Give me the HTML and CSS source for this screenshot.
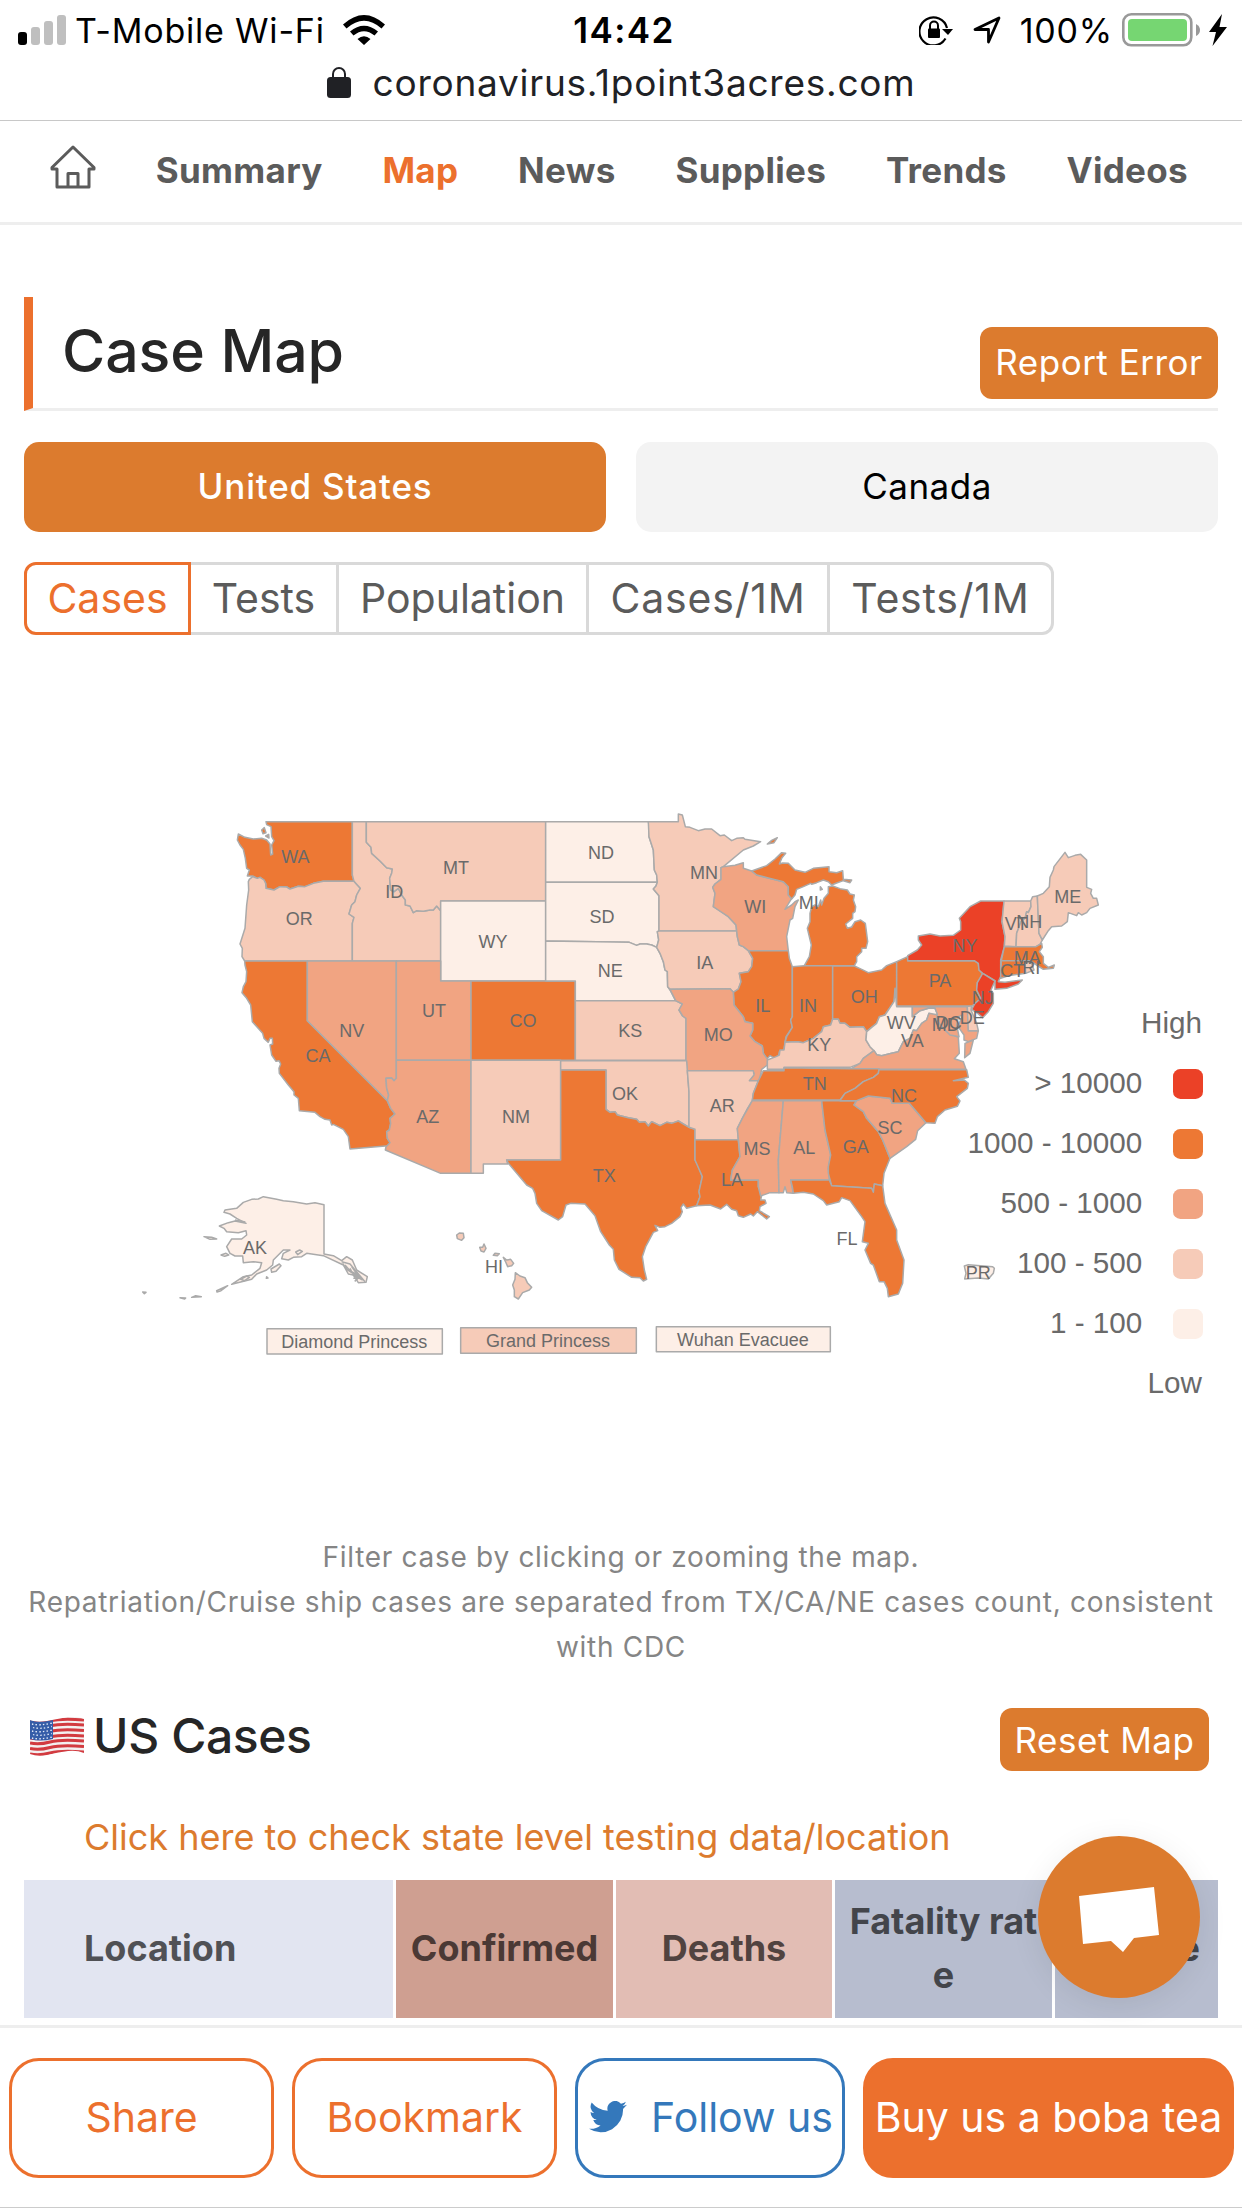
FILE: index.html
```html
<!DOCTYPE html>
<html lang="en">
<head>
  <meta charset="UTF-8">
  <meta name="viewport" content="width=device-width, initial-scale=1.0">
  <title>Case Map</title>
  <link rel="stylesheet" href="styles.css">
</head>
<body>
  <header class="browser-bar">
    <div class="status">
      <div class="status-left">
        <svg class="signal" viewBox="0 0 48 30"><rect y="17" width="9" height="13" rx="3"/><g fill="#bfbfbf"><rect x="13" y="12" width="9" height="18" rx="3"/><rect x="26" y="6" width="9" height="24" rx="3"/><rect x="39" width="9" height="30" rx="3"/></g></svg>
        <span class="carrier">T-Mobile Wi-Fi</span>
        <svg class="wifi" viewBox="0 0 42 30"><path d="M0 9.5Q21-9.5 42 9.5L38.500 13.500Q21-2 3.500 13.500ZM7 16.500Q21 5 35 16.500L31.500 20.500Q21 12 10.500 20.500ZM14.500 24Q21 18.500 27.500 24L21 30Z"/></svg>
      </div>
      <span class="clock">14:42</span>
      <div class="status-right">
        <svg class="rotation" viewBox="0 0 34 30"><path d="M26.500 23.500A14 14 0 1 1 28 13" fill="none" stroke="#000" stroke-width="2.200"/><path d="M23 14h11l-5 6z"/><rect x="9" y="13.500" width="12" height="9.500" rx="1"/><path d="M11 14v-3.500a4 4 0 0 1 8 0V14" fill="none" stroke="#000" stroke-width="2"/></svg>
        <svg class="location" viewBox="0 0 28 28"><path d="M2 13.500 26 2 15.500 26V13.500Z" fill="none" stroke="#000" stroke-width="2.800" stroke-linejoin="round"/></svg>
        <span class="percent">100%</span>
        <svg class="battery" viewBox="0 0 78 34"><rect x="1.300" y="1.300" width="68" height="31" rx="8" fill="none" stroke="#999" stroke-width="2.600"/><rect x="6" y="6" width="59" height="22" rx="4" fill="#76d672"/><path d="M74 11q4 2 4 6t-4 6z" fill="#999"/></svg>
        <svg class="bolt" viewBox="0 0 18 32"><path d="M13 0 0 18h7L3.500 32 18 13h-7.500z"/></svg>
      </div>
    </div>
    <div class="address">
      <svg class="lock" viewBox="0 0 24 31"><rect y="10" width="24" height="21" rx="3.500" fill="#202125"/><path d="M6 12V7a6 6 0 0 1 12 0v5" fill="none" stroke="#202125" stroke-width="2"/></svg>
      <span>coronavirus.1point3acres.com</span>
    </div>
  </header>

  <nav class="nav">
    <svg class="home" viewBox="0 0 46 44"><path d="M23 2 44 22.500V24H39V42H7V24H2V22.500Z M18 42V28.500H28V42" fill="none" stroke="#5b5b5b" stroke-width="3" stroke-linejoin="round"/></svg>
    <a>Summary</a>
    <a class="active">Map</a>
    <a>News</a>
    <a>Supplies</a>
    <a>Trends</a>
    <a>Videos</a>
  </nav>

  <main class="content">
    <div class="section-title">
      <h1>Case Map</h1>
      <button class="btn report">Report Error</button>
    </div>
    <div class="countries">
      <button class="selected">United States</button>
      <button>Canada</button>
    </div>
    <div class="tabs">
      <span class="tab on">Cases</span>
      <span class="tab">Tests</span>
      <span class="tab">Population</span>
      <span class="tab per">Cases/1M</span>
      <span class="tab per">Tests/1M</span>
    </div>
  </main>

  <svg class="map" viewBox="0 1902 3726 2700">
    <g class="states">
      <!-- west -->
      <g transform="translate(660 2370)">
        <path class="c4" d="M138 95H397V255L402 274H310L280 280 255 290 235 289 210 297 200 291 180 290 162 300 138 295 137 280 132 270 120 262 112 265 98 258 82 258 88 240 80 235 76 205 70 178 60 165 52 150 55 132 75 142 100 147 125 145 140 150 150 162 152 195 158 192 155 165 162 152 155 140 153 110 140 104Z"/>
        <path class="c4" d="M125 120l8-7 5 15-9 3zM137 138l9-5 1 11z"/>
        <path class="c2" d="M98 260 88 268 85 275 86 300 80 345 75 415 60 462 67 475 66 500 74 513H397V400L402 382 387 372 395 345 405 335 410 315 421 295 412 285 402 274H310L280 280 255 290 235 289 210 297 200 291 180 290 162 300 138 295 137 280 132 270 120 262 112 265Z"/>
        <path class="c2" d="M397 95H439V157L453 172 455 190 480 213 500 233 517 237 515 250 509 265 512 300 522 305 535 295 545 315 556 330 556 345 570 348 580 368 590 362 610 364 630 360 640 360 650 348 662 362V513H397V400L402 382 387 372 395 345 405 335 410 315 421 295 412 285 402 274 397 255Z"/>
        <path class="c2" d="M439 95H977V333H662V362L650 348 640 360 630 360 610 364 590 362 580 368 570 348 556 345 556 330 545 315 535 295 522 305 512 300 509 265 515 250 517 237 500 233 480 213 455 190 453 172 439 157Z"/>
        <path class="c1" d="M662 333H977V573H662Z"/>
        <path class="c4" d="M74 513H262V692L502 932 512 955 525 972 510 985 512 1000 508 1020 500 1025 502 1045 510 1058 505 1067 390 1077 385 1040 370 1018 340 1003 335 1005 330 990 315 988 300 980 285 967 238 962 235 925 222 915 222 905 205 885 178 850 177 835 182 822 177 812 168 814 155 795 150 765 158 762 157 745 150 745 145 757 132 745 128 730 97 695 92 645 80 625 66 608 70 590 78 575 80 545 75 525Z"/>
        <path class="c3" d="M262 513H529V865L522 872 515 864 498 865 500 895 506 915 502 932 262 692Z"/>
        <path class="c3" d="M529 513H662V573H753V811H529Z"/>
        <path class="c3" d="M529 811H753V1150H662L496 1080 498 1070 510 1058 502 1045 500 1025 508 1020 512 1000 510 985 525 972 512 955 502 932 506 915 500 895 498 865 515 864 522 872 529 865Z"/>
        <path class="c4" d="M753 573H1066V811H753Z"/>
        <path class="c2" d="M753 811H1022V1110H860L863 1122H790V1150H753Z"/>
      </g>
      <!-- midwest -->
      <g transform="translate(1590 2370)">
        <path class="c1" d="M47 95H355L357 105 357 140 370 180 373 240 380 255 382 277H47Z"/>
        <path class="c1" d="M47 277H382L378 288 370 297 387 317V423L382 425 386 450 380 472 365 465 350 462 330 462 320 466 298 457 200 455 47 453Z"/>
        <path class="c1" d="M47 453 200 455 298 457 320 466 330 462 350 462 365 465 380 472 390 490 400 515 405 540 412 545 413 590 420 600 437 632H136V573H47Z"/>
        <path class="c2" d="M136 632H437L457 642 447 660 458 678 468 685V811H136Z"/>
        <path class="c2" d="M355 95H445V72L457 75 466 110 480 112 505 122 525 117 545 117 570 137 583 135 605 152 620 145 640 143 645 148 692 155 670 168 640 180 580 230 573 233V268L555 282 548 292 555 310 550 350 565 360 595 380 618 405 620 423H387V317L370 297 378 288 382 277 380 255 373 240 370 180 357 140Z"/>
        <path class="c2" d="M382 425 387 423H620L622 440 628 465 640 470 655 482 668 505 665 530 655 545 628 550 633 575 625 597 610 607 600 596 420 598 413 590 412 545 405 540 400 515 390 490 380 472 386 450Z"/>
        <path class="c3" d="M580 230 615 226 640 218 640 235 665 243 680 255 715 264 760 275 775 290 775 315 785 325 765 358 785 345 795 335 805 330 795 350 788 385 780 390 770 440 775 483 655 482 640 470 628 465 622 440 618 405 595 380 565 360 550 350 555 310 548 292 555 282 573 268V233Z"/>
        <path class="c4" d="M655 482H775L778 505 787 530V680L782 690 787 712 768 740 765 757 762 780 748 785 745 800 735 805 720 797 710 808 700 790 697 768 675 755 660 738 668 720 668 700 645 695 640 680 612 645 610 607 625 597 633 575 628 550 655 545 665 530 668 505Z"/>
        <path class="c3" d="M420 598 600 596 610 607 612 645 640 680 645 695 668 700 668 720 660 738 675 755 697 768 700 790 713 808 712 825 695 838 688 872H657L672 850 665 842H472L468 811V685L458 678 447 660 457 642 437 632Z"/>
      </g>
      <!-- great lakes and northeast -->
      <g transform="translate(2280 2370)">
        <path class="c4" d="M-25 243 20 227 45 207 65 188 77 190 66 203 58 222 68 219 85 220 105 240 135 247 160 235 207 230 207 245 230 248 248 242 250 268 275 270 270 278 250 272 230 279 215 285 205 275 190 270 170 278 155 283 152 280 130 290 110 298 105 315 95 327 85 315 85 290 70 275 25 264 -10 255Z"/>
        <path class="c4" d="M22 162 35 151 52 143 42 158ZM181 290l6 8-6 2z"/>
        <path class="c4" d="M133 527 148 500 154 465 142 415 150 395 150 370 155 350 165 345 175 350 182 330 185 345 192 325 205 310 205 290 218 288 240 296 262 300 270 312 283 315 280 330 287 350 285 365 278 370 278 385 257 402 262 415 275 411 285 395 302 390 316 400 323 455 318 475 305 475 305 485 290 500 290 515 283 527Z"/>
        <path class="c4" d="M97 530 133 527H218V687L212 705 190 710 185 725 172 735 160 745 130 758 112 755 75 757 80 740 97 712 92 690 97 680Z"/>
        <path class="c4" d="M218 528H283L305 538 325 548 365 540 380 527 410 515V590L402 635 375 675 358 680 350 700 335 712 320 725 310 710 270 712 255 700 240 700 235 688 218 687Z"/>
        <path class="c2" d="M218 687 235 688 240 700 255 700 270 712 310 710 320 725 318 750 330 770 342 782 310 805 300 820 270 832H72V838H22V810L48 800 58 795 60 780 72 780 75 757 112 755 130 758 160 745 172 735 185 725 190 710 212 705Z"/>
        <path class="c1" d="M405 595 410 650H457V680L480 662 505 655 525 655 532 672 520 678 507 670 500 690 485 700 470 722 460 720 450 745 430 755 415 785 395 790 365 797 350 794 342 782 330 770 318 750 320 725 335 712 350 700 358 680 375 675 402 635Z"/>
        <path class="c3" d="M280 832 300 820 310 805 342 782 350 794 365 797 395 790 415 785 430 755 450 745 460 720 470 722 485 700 500 690 507 670 535 675 540 700 560 725 595 742 598 790 583 806 610 815 618 838H270Z"/>
        <path class="c3" d="M457 650H622L625 722H655L650 745 625 755 612 750 612 735 598 715 598 700 608 675 595 680 590 705 597 740 570 735 550 715 530 690 532 672 525 655 505 655 480 662 457 680Z"/>
        <path class="c3" d="M615 760 640 750 630 790 614 803Z"/>
        <path class="c2" d="M622 650 635 645 633 660 650 700 655 722H625Z"/>
        <path class="c4" d="M410 515 443 500V512H643L655 520 657 540 668 550 665 560 652 578 650 600 662 625 650 640 635 648H410Z"/>
        <path class="c5" d="M443 512V497L472 480 485 465 475 450 475 438 510 432 540 438 580 436 602 420V395L598 385 630 350 662 333H732L730 360 726 395 735 440 733 470 722 510V560L715 575 735 577 787 570 775 582 740 595 705 598V572L668 550 657 540 655 520 643 512Z"/>
        <path class="c5" d="M668 550 705 573 693 600 700 610 700 640 685 665 668 683 655 672 635 658 645 640 662 625 650 600 652 578Z"/>
        <path class="c2" d="M732 333H812L813 350 805 368 800 365 795 385 783 395 770 430 768 470 733 468 735 440 726 395Z"/>
        <path class="c2" d="M812 333 818 320 832 318 837 430 847 450 840 463 828 470H768L770 430 783 395 795 385 800 365 805 368 813 350Z"/>
        <path class="c2" d="M832 318 850 310 868 290 870 262 880 240 882 230 915 187 925 203 945 196 962 193 980 210V292L995 298 992 310 1000 325 1010 325 1015 345 990 355 980 368 965 375 955 368 950 377 925 368 922 395 905 408 875 410 865 422 847 450 837 430Z"/>
        <path class="c4" d="M733 470H828L845 460 847 472 838 485 850 500 850 520 865 532 883 525 880 535 850 538 830 525 810 512H724Z"/>
        <path class="c4" d="M724 512H795L797 550 745 557 722 565Z"/>
        <path class="c2" d="M795 512H812L822 540 797 550Z"/>
      </g>
      <!-- south -->
      <g transform="translate(1440 3120)">
        <path class="c2" d="M242 62H620L622 92 627 155V262L595 243 575 250 560 247 540 257 515 245 505 258 495 245 478 247 470 238 445 233 412 225 405 215 390 217 378 208V90H242Z"/>
        <path class="c4" d="M242 90H378V208L390 217 405 215 412 225 445 233 470 238 478 247 495 245 505 258 515 245 540 257 560 247 575 250 595 243 627 262 645 268V360L655 378 667 410 657 455 660 470 650 497 620 505 610 492 603 503 607 515 600 530 575 550 555 560 540 562 525 556 533 572 520 577 497 620 487 650 493 690 500 718 490 723 480 713 455 712 417 688 403 660 400 628 388 615 362 575 345 527 315 492 272 490 258 495 248 530 235 540 185 512 170 490 165 460 158 445 140 435 85 370 80 360H242Z"/>
        <path class="c2" d="M622 92H820L822 105 808 122H835L820 160 817 182 800 210 787 235 772 265 775 299H645V268L627 262V155Z"/>
        <path class="c4" d="M645 299H775L777 320 780 350 757 390 752 420H835L835 440 845 465 842 480 855 480 858 490 840 500 838 512 868 530 860 537 832 515 820 528 812 522 790 532 775 527 770 512 755 508 740 493 722 507 690 495 650 497 660 470 657 455 667 410 645 360Z"/>
        <path class="c3" d="M817 182H910L895 360 897 458 870 458 842 468 835 440V420H752L757 390 780 350 775 299 772 265 787 235Z"/>
        <path class="c3" d="M910 182H1025L1035 270 1052 345 1045 385 1048 420H932L940 460 920 458 915 440 910 458H897L895 360Z"/>
        <path class="c4" d="M1025 182H1130L1122 195 1150 215 1160 235 1195 275 1208 300 1230 355 1212 400 1208 437 1183 432 1180 457 1175 445 1055 437 1045 400 1045 380 1052 345 1035 270Z"/>
        <path class="c4" d="M932 420H1048L1055 437 1175 445 1180 457 1183 432 1208 437 1215 490 1250 570 1250 600 1272 660 1268 730 1255 762 1225 770 1222 745 1212 725 1198 725 1180 675 1172 670 1155 630 1165 610 1147 605 1155 545 1145 530 1110 482 1085 473 1078 485 1040 495 1030 482 1000 462 970 457 940 460 937 440Z"/>
        <path class="c3" d="M1130 182 1165 168 1230 175 1237 190H1288L1338 248 1313 272 1307 298 1280 320 1230 355 1208 300 1195 275 1160 235 1150 215 1122 195Z"/>
        <path class="c4" d="M850 92H912V83L1110 86H1197L1195 100 1180 112 1150 125 1125 145 1095 160 1080 180H817L820 160 835 122Z"/>
        <path class="c4" d="M1197 89H1460L1465 112 1420 122 1453 120 1465 130 1462 145 1430 170 1440 183 1432 199 1395 210 1372 230 1365 250 1338 248 1288 190H1237L1230 175 1165 168 1130 182H1080L1095 160 1125 145 1150 125 1180 112 1195 100Z"/>
      </g>
      <!-- alaska, hawaii and ship cases -->
      <g transform="translate(360 3510)">
        <path class="c1" d="M430 80 470 88 490 92 520 95 560 102 585 98 612 104V252L640 257 665 272 680 260 697 270 710 300 742 320 738 337 715 338 700 315 685 312 670 285 610 257 560 250 545 260 520 262 505 270 485 266 490 250 510 240 490 240 460 270 458 285 440 300 410 312 395 328 335 343 370 320 395 315 420 295 425 278 400 275 370 278 368 258 345 258 330 250 320 230 335 207 365 207 380 195 378 182 355 188 320 185 312 175 298 168 325 158 345 153 378 160 350 145 330 132 312 127 315 120 350 115 370 97 395 88 415 87Z"/>
        <path class="c1" d="M252 200 275 202 290 207 270 208ZM303 255l15-5 8 5-12 4zM453 297l25-15 5 5-15 17-13 3zM290 362l33-15-20 15-12 4zM215 382l12-5 17 3zM68 366l10 1-5 4zM180 383l17 1-3 3zM440 320l4 4-5 1zM527 246l12-6 8 4-14 10zM362 328l18-10 8 4-14 10z"/>
        <path class="c1" d="M665 275 690 282 735 335M668 280 680 298 722 325M675 285 690 302 722 320M690 295 700 315 728 330M695 290 715 318 728 328M700 325 718 325M704 334 722 318M345 150 376 156"/>
        <path class="c2" d="M1010 195 1018 189 1030 190 1032 203 1025 211 1012 206ZM1079 232 1088 232 1092 222 1098 235 1092 246 1083 243ZM1120 256 1125 250 1138 251 1132 257ZM1150 262 1160 270 1172 268 1181 280 1175 287 1163 290 1157 276ZM1186 308 1200 318 1215 323 1222 338 1235 352 1228 360 1208 368 1195 387 1183 380V360L1178 345 1185 328Z"/>
        <path class="c1" d="M441 476H967V552H441Z"/>
        <path class="c2" d="M1022 473H1549V550H1022Z"/>
        <path class="c1" d="M1609 470H2131V545H1609Z"/>
      </g>
      <path class="c1" d="M2893 3798 2905 3794 2978 3800 2983 3805 2980 3820 2965 3837 2935 3834 2894 3837 2898 3820Z"/>
    </g>

    <g class="labels">
      <g transform="translate(660 2370)">
        <text x="226" y="219">WA</text><text x="238" y="404">OR</text><text x="523" y="323">ID</text><text x="708" y="252">MT</text><text x="819" y="474">WY</text><text x="395" y="741">NV</text><text x="294" y="815">CA</text><text x="642" y="681">UT</text><text x="909" y="711">CO</text><text x="623" y="999">AZ</text><text x="888" y="999">NM</text>
      </g>
      <g transform="translate(1590 2370)">
        <text x="213" y="207">ND</text><text x="216" y="399">SD</text><text x="241" y="561">NE</text><text x="301" y="741">KS</text><text x="522" y="267">MN</text><text x="524" y="537">IA</text><text x="676" y="369">WI</text><text x="565" y="753">MO</text><text x="698" y="666">IL</text>
      </g>
      <g transform="translate(2280 2370)">
        <text x="146" y="356">MI</text><text x="144" y="666">IN</text><text x="313" y="639">OH</text><text x="178" y="783">KY</text><text x="540" y="591">PA</text><text x="615" y="486">NY</text><text x="668" y="642">NJ</text><text x="769" y="420">VT</text><text x="808" y="415">NH</text><text x="923" y="339">ME</text><text x="802" y="522">MA</text><text x="757" y="561">CT</text><text x="814" y="552">RI</text><text x="424" y="717">WV</text><text x="457" y="771">VA</text><text x="557" y="723">MD</text><text x="566" y="717">DC</text><text x="637" y="702">DE</text>
      </g>
      <g transform="translate(1440 3120)">
        <text x="435" y="180">OK</text><text x="727" y="216">AR</text><text x="373" y="426">TX</text><text x="756" y="438">LA</text><text x="831" y="345">MS</text><text x="973" y="342">AL</text><text x="1127" y="339">GA</text><text x="1101" y="615">FL</text><text x="1230" y="282">SC</text><text x="1004" y="150">TN</text><text x="1272" y="186">NC</text>
      </g>
      <g transform="translate(360 3510)">
        <text x="405" y="252">AK</text><text x="1122" y="309">HI</text><text x="703" y="534">Diamond Princess</text><text x="1284" y="532">Grand Princess</text><text x="1869" y="528">Wuhan Evacuee</text>
      </g>
      <text x="2935" y="3837">PR</text>
    </g>

    <g class="legend" transform="translate(2700 2940)">
      <text x="906" y="158">High</text>
      <text x="727" y="340">&gt; 10000</text><rect class="c5" x="819" y="267" width="90" height="90" rx="22"/>
      <text x="727" y="520">1000 - 10000</text><rect class="c4" x="819" y="447" width="90" height="90" rx="22"/>
      <text x="727" y="700">500 - 1000</text><rect class="c3" x="819" y="627" width="90" height="90" rx="22"/>
      <text x="727" y="880">100 - 500</text><rect class="c2" x="819" y="807" width="90" height="90" rx="22"/>
      <text x="727" y="1060">1 - 100</text><rect class="c1" x="819" y="987" width="90" height="90" rx="22"/>
      <text x="906" y="1240">Low</text>
    </g>
  </svg>

  <div class="note">Filter case by clicking or zooming the map.<br>Repatriation/Cruise ship cases are separated from TX/CA/NE cases count, consistent with CDC</div>

  <section class="cases">
    <div class="cases-head">
      <svg class="flag" viewBox="0 0 54 39">
        <defs><clipPath id="wave"><path d="M0 3Q7 6 17 4T38 0Q47-1 54 2V36Q47 33 38 34T17 38Q8 40 0 37Z"/></clipPath></defs>
        <g clip-path="url(#wave)">
          <rect width="54" height="39" fill="#f3f0f0"/>
          <g fill="none" stroke="#d23b40" stroke-width="3.100"><path d="M0 5Q9 7 20 4T54 3"/><path d="M0 10Q9 12 20 9T54 8"/><path d="M0 15.500Q9 17.500 20 14.500T54 13.500"/><path d="M0 21Q9 23 20 20T54 19"/><path d="M0 26Q9 28 20 25T54 24"/><path d="M0 31.500Q9 33.500 20 30.500T54 29.500"/><path d="M0 37Q9 39 20 36T54 35"/></g>
          <path d="M0 3Q8 6 23 3V22Q10 25 0 22Z" fill="#365da8"/>
          <g fill="none" stroke="#e4ebf8" stroke-width="1.300" stroke-dasharray="1.500 2.200"><path d="M2 7Q10 9 22 6"/><path d="M3 10.500Q10 12.500 22 9.500"/><path d="M2 14Q10 16 22 13"/><path d="M3 17.500Q10 19.500 22 16.500"/><path d="M2 21Q10 23 22 20"/></g>
        </g>
      </svg>
      <h2>US Cases</h2>
      <button class="btn reset">Reset Map</button>
    </div>
    <a class="testing-link">Click here to check state level testing data/location</a>
    <div class="table-head">
      <div class="cell loc">Location</div>
      <div class="cell confirmed">Confirmed</div>
      <div class="cell deaths">Deaths</div>
      <div class="cell rate">Fatality rate</div>
      <div class="cell rate last">e</div>
    </div>
  </section>

  <div class="chat">
    <svg viewBox="0 0 84 66"><path d="M2 10 77 1 82 49 57 52 46 66 34 55 6 58Z" fill="#fff"/></svg>
  </div>

  <footer class="footer">
    <button class="action">Share</button>
    <button class="action">Bookmark</button>
    <button class="action follow">
      <svg viewBox="0 0 24 20"><path d="M24 2.400a10 10 0 0 1-2.800.8A5 5 0 0 0 23.300.5a10 10 0 0 1-3.100 1.200 4.900 4.900 0 0 0-8.400 4.500A14 14 0 0 1 1.700 1a4.900 4.900 0 0 0 1.500 6.600A5 5 0 0 1 1 7v.1a4.900 4.900 0 0 0 3.900 4.800 5 5 0 0 1-2.200.1 4.900 4.900 0 0 0 4.600 3.400A10 10 0 0 1 0 17.500 14 14 0 0 0 21.500 5z" fill="#3478bb"/></svg>
      <span>Follow us</span>
    </button>
    <button class="action boba">Buy us a boba tea</button>
  </footer>
</body>
</html>
```
FILE: styles.css
```css
* {
  box-sizing: border-box;
}
html, body {
  margin: 0;
  padding: 0;
  height: 2208px;
  overflow: hidden;
}
body {
  font-family: Inter, 'Liberation Sans', sans-serif;
  background: #fff;
  color: #5b5b5b;
  position: relative;
  display: flex;
  flex-direction: column;
}
h1, h2 {
  margin: 0;
  font-weight: 500;
  color: #262626;
}
button {
  font: inherit;
  border: none;
  padding: 0;
  white-space: nowrap;
}
svg {
  display: block;
  flex: none;
}
.browser-bar {
  height: 121px;
  border-bottom: 1px solid #c8c8c8;
  color: #000;
}
.status {
  display: grid;
  grid-template-columns: 1fr auto 1fr;
  align-items: center;
  height: 60px;
  padding: 0 15px 0 18px;
  font-size: 34px;
}
.status-left, .status-right {
  display: flex;
  align-items: center;
}
.status-right {
  justify-content: flex-end;
}
.signal {
  width: 48px;
  margin-right: 9px;
}
.carrier {
  letter-spacing: 0.8px;
}
.wifi {
  width: 42px;
  margin-left: 18px;
}
.clock {
  font-size: 35px;
  font-weight: 600;
  letter-spacing: 1.4px;
  padding-left: 3px;
}
.rotation {
  width: 34px;
  margin-right: 20px;
}
.location {
  width: 28px;
  margin-right: 19px;
}
.percent {
  letter-spacing: 0.8px;
}
.battery {
  width: 78px;
  margin: 0 9px 0 9px;
}
.bolt {
  width: 18px;
}
.address {
  display: flex;
  align-items: center;
  justify-content: center;
  height: 44px;
  font-size: 37px;
  letter-spacing: 0.75px;
  color: #202125;
}
.lock {
  width: 24px;
  margin-right: 22px;
}
.nav {
  display: flex;
  align-items: center;
  justify-content: space-between;
  height: 104px;
  padding: 0 54px 3px 50px;
  border-bottom: 3px solid #eee;
  font-size: 35px;
  font-weight: 700;
  letter-spacing: 0.3px;
}
.home {
  width: 46px;
  margin-bottom: 6px;
}
.nav .active {
  color: #ec702d;
}
.content {
  padding: 72px 24px 0;
}
.section-title {
  display: flex;
  justify-content: space-between;
  height: 114px;
  padding-left: 29px;
  border-left: 9px solid #ec702d;
  border-bottom: 3px solid #eee;
}
h1 {
  font-size: 59px;
  line-height: 107px;
  letter-spacing: -0.1px;
}
.btn {
  background: #dc7b2e;
  color: #fff;
  border-radius: 12px;
  font-size: 35px;
  letter-spacing: 0.5px;
}
.report {
  width: 238px;
  height: 72px;
  margin-top: 30px;
  padding-bottom: 2px;
}
.countries {
  display: grid;
  grid-template-columns: 1fr 1fr;
  gap: 30px;
  margin-top: 31px;
}
.countries button {
  height: 90px;
  padding-bottom: 2px;
  border-radius: 15px;
  background: #f3f3f3;
  color: #000;
  font-size: 35px;
  letter-spacing: 0.5px;
}
.countries .selected {
  background: #dc7b2e;
  color: #fff;
  font-weight: 500;
  letter-spacing: 0.8px;
}
.tabs {
  display: grid;
  grid-template-columns: 167px 148px 250px 241px 224px;
  height: 72px;
  margin-top: 30px;
}
.tab {
  border: 3px solid #d9d9d9;
  border-left: none;
  line-height: 67px;
  text-align: center;
  font-size: 41px;
}
.per {
  letter-spacing: 0.8px;
}
.tab:last-child {
  border-radius: 0 12px 12px 0;
}
.tab.on {
  border: 3px solid #ec702d;
  border-radius: 12px 0 0 12px;
  color: #ec702d;
}

/* map */
.map {
  width: 1242px;
  height: 900px;
}
.states path {
  stroke: #aaa;
  stroke-width: 4.5;
  stroke-linejoin: round;
}
.c1 { fill: #fdefe7; }
.c2 { fill: #f6cbb8; }
.c3 { fill: #f1a482; }
.c4 { fill: #ed7834; }
.c5 { fill: #eb4127; }
.map text {
  font-family: 'Liberation Sans', Arial, sans-serif;
  fill: #6a6a6a;
}
.labels text {
  font-size: 54px;
  text-anchor: middle;
}
.legend text {
  font-size: 89px;
  text-anchor: end;
}

.note {
  margin-top: 1px;
  padding: 0 24px;
  text-align: center;
  font-size: 28px;
  line-height: 45px;
  letter-spacing: 0.7px;
  color: #858585;
}
.cases {
  padding: 0 24px;
}
.cases-head {
  display: flex;
  align-items: center;
  height: 63px;
  margin-top: 38px;
  padding: 0 9px 0 6px;
}
.flag {
  width: 54px;
  margin: 0 9px 6px 0;
}
h2 {
  font-size: 48px;
  letter-spacing: -0.4px;
  padding-bottom: 8px;
}
.reset {
  width: 209px;
  height: 63px;
  margin-left: auto;
}
.testing-link {
  display: block;
  margin: 36px 0 12px 60px;
  font-size: 36px;
  line-height: 61px;
  color: #dc7b2e;
}
.table-head {
  display: grid;
  grid-template-columns: 369px 217px 216px 217px 163px;
  gap: 3px;
  height: 138px;
  font-size: 36px;
  font-weight: 700;
  line-height: 54px;
}
.cell {
  display: flex;
  align-items: center;
  justify-content: center;
  text-align: center;
  padding-bottom: 2px;
}
.loc {
  justify-content: flex-start;
  padding-left: 60px;
  background: #e2e5f1;
  color: #505155;
}
.confirmed {
  background: #cf9f91;
  color: #4b3935;
}
.deaths {
  background: #e2bdb4;
  color: #514340;
}
.rate {
  padding: 0 9px 2px;
  background: #b7bdcf;
  color: #43454b;
  word-break: break-all;
}
.last {
  justify-content: flex-end;
  padding-right: 18px;
}
.chat {
  position: absolute;
  left: 1038px;
  top: 1836px;
  width: 162px;
  height: 162px;
  border-radius: 50%;
  background: #dc7b2e;
  box-shadow: 0 6px 30px rgba(0, 0, 0, 0.08);
}
.chat svg {
  width: 84px;
  margin: 50px 0 0 39px;
}
.footer {
  display: grid;
  grid-template-columns: 265px 265px 270px 371px;
  gap: 18px;
  margin-top: 7px;
  height: 183px;
  padding: 30px 9px 0;
  border-top: 3px solid #eee;
  border-bottom: 1px solid #ccc;
}
.action {
  display: flex;
  align-items: center;
  justify-content: center;
  height: 120px;
  padding-bottom: 2px;
  border: 3px solid #ec702d;
  border-radius: 30px;
  background: #fff;
  color: #ec702d;
  font-size: 41px;
}
.follow {
  border-color: #3478bb;
  color: #3478bb;
}
.follow svg {
  width: 38px;
  margin: 0 24px 0 2px;
}
.boba {
  background: #ec702d;
  color: #fff;
}
```
